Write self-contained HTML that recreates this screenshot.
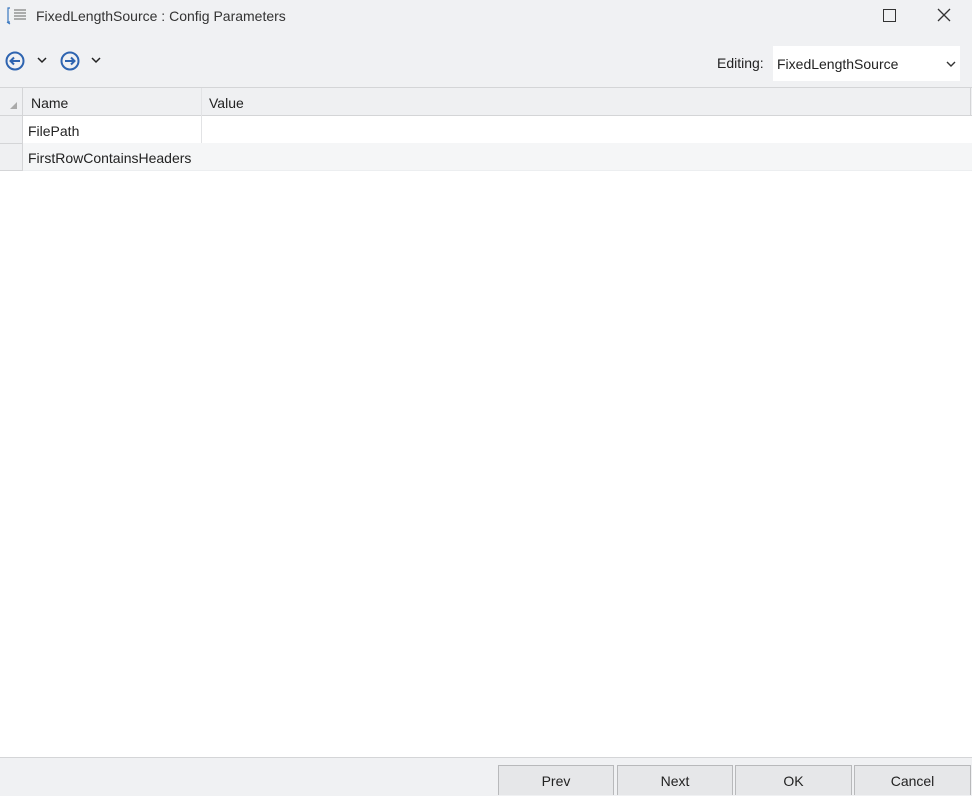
<!DOCTYPE html>
<html><head><style>
body{margin:0;width:972px;height:795px;background:#f0f1f3;font-family:"Liberation Sans",sans-serif;position:relative;overflow:hidden;color:#222}
.a{position:absolute}
.t{font-size:14px}
.btn{position:absolute;top:765px;height:30px;background:#e6e7e9;border:1px solid #b8b9bb;border-bottom:none;box-sizing:border-box;text-align:center;line-height:30px;font-size:14px;color:#222}
</style></head><body>
<svg class="a" style="left:6px;top:6px" width="22" height="20"><path d="M4 2H2V16H4M1 16l3 2" stroke="#3a78c0" fill="none" stroke-width="1.2"/><path d="M8 4h12M8 7h12M8 10h12M8 13h12" stroke="#666" stroke-width="1"/></svg>
<div class="a t" style="left:36px;top:8px;color:#333">FixedLengthSource : Config Parameters</div>
<div class="a" style="left:883px;top:9px;width:11px;height:11px;border:1.3px solid #333"></div>
<svg class="a" style="left:937px;top:8px" width="14" height="14"><path d="M1 1L13 13M13 1L1 13" stroke="#333" stroke-width="1.3"/></svg>
<svg class="a" style="left:4px;top:50px" width="100" height="22"><circle cx="11" cy="11" r="8.5" stroke="#2e64b0" stroke-width="2" fill="none"/><path d="M16 11H7M10 7.5L6.5 11 10 14.5" stroke="#2e64b0" stroke-width="2" fill="none"/><path d="M34 8l4 4 4-4" stroke="#222" stroke-width="1.5" fill="none"/><circle cx="66" cy="11" r="8.5" stroke="#2e64b0" stroke-width="2" fill="none"/><path d="M61 11H70M67 7.5L70.5 11 67 14.5" stroke="#2e64b0" stroke-width="2" fill="none"/><path d="M88 8l4 4 4-4" stroke="#222" stroke-width="1.5" fill="none"/></svg>
<div class="a t" style="left:717px;top:55px">Editing:</div>
<div class="a" style="left:773px;top:46px;width:187px;height:35px;background:#fff"></div>
<div class="a t" style="left:777px;top:56px">FixedLengthSource</div>
<svg class="a" style="left:946px;top:60px" width="10" height="8"><path d="M1 2l4 4 4-4" stroke="#333" stroke-width="1.4" fill="none"/></svg>
<div class="a" style="left:0;top:87px;width:972px;height:670px;background:#fff;border-top:1px solid #d4d5d7"></div>
<div class="a" style="left:0;top:88px;width:972px;height:27px;background:#eff0f2;border-bottom:1px solid #d4d5d7"></div>
<div class="a" style="left:22px;top:88px;width:1px;height:83px;background:#d4d5d7"></div>
<div class="a" style="left:201px;top:88px;width:1px;height:83px;background:#e2e3e5"></div>
<div class="a" style="left:970px;top:88px;width:1px;height:28px;background:#d4d5d7"></div>
<svg class="a" style="left:9px;top:101px" width="10" height="10"><path d="M8 1V8H1Z" fill="#aaa"/></svg>
<div class="a t" style="left:31px;top:95px">Name</div>
<div class="a t" style="left:209px;top:95px">Value</div>
<div class="a" style="left:0;top:116px;width:22px;height:54px;background:#eff0f2"></div>
<div class="a" style="left:0;top:143px;width:22px;height:1px;background:#d4d5d7"></div>
<div class="a" style="left:0;top:170px;width:22px;height:1px;background:#d4d5d7"></div>
<div class="a" style="left:23px;top:143px;width:949px;height:27px;background:#f5f6f7"></div>
<div class="a" style="left:23px;top:170px;width:949px;height:1px;background:#eceef0"></div>
<div class="a t" style="left:28px;top:123px">FilePath</div>
<div class="a t" style="left:28px;top:150px">FirstRowContainsHeaders</div>
<div class="a" style="left:0;top:757px;width:972px;height:1px;background:#d4d5d7"></div>
<div class="btn" style="left:498px;width:116px">Prev</div>
<div class="btn" style="left:617px;width:116px">Next</div>
<div class="btn" style="left:735px;width:117px">OK</div>
<div class="btn" style="left:854px;width:117px">Cancel</div>
</body></html>
